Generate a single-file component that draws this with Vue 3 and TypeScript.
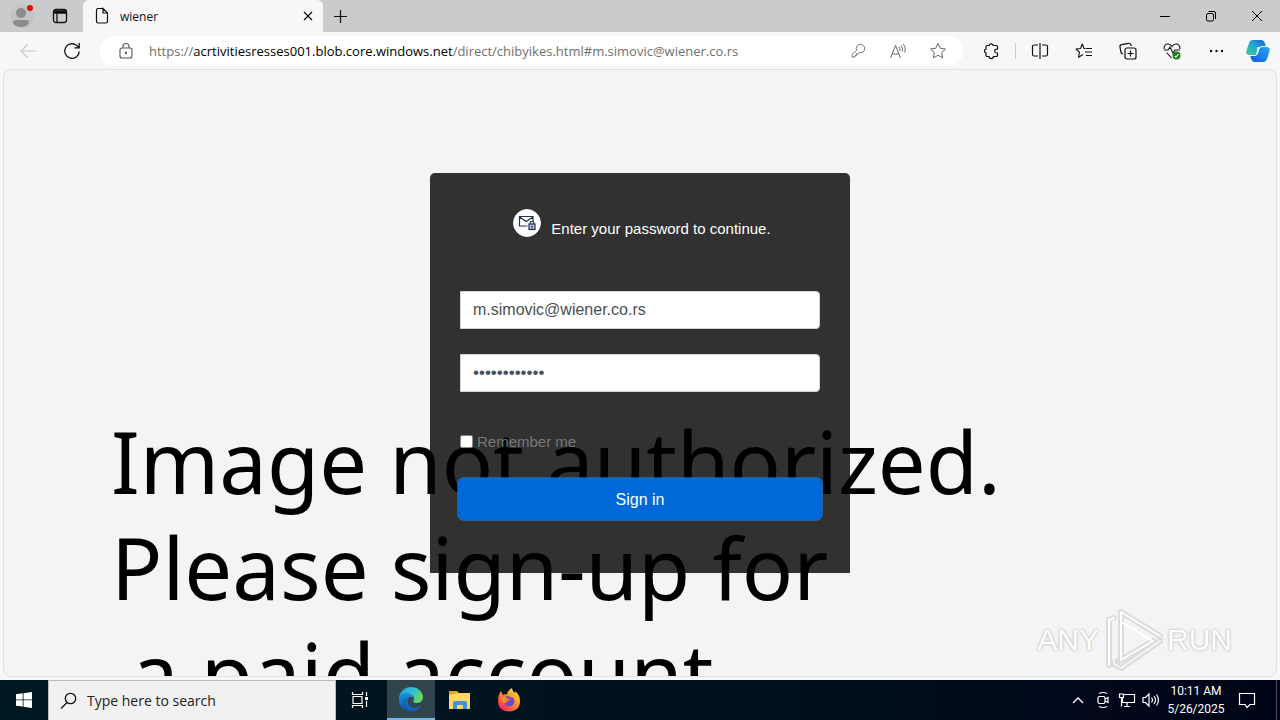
<script setup lang="ts">
import { ref } from 'vue'

const email = ref('m.simovic@wiener.co.rs')
const password = ref('abcdefghijkl')
const remember = ref(false)
const search = ref('')
</script>

<template>
  <div class="screen">
    <header class="tabs">
      <button class="tab-tool profile" aria-label="Profile">
        <svg width="26" height="26" viewBox="0 0 26 26"><circle cx="13" cy="13" r="12" fill="#c3c3c3" /><circle cx="12" cy="10" r="5" fill="#8c8c8c" /><path d="M4 20q0-3 3-3h10q3 0 3 3-2 4-8 4t-8-4z" fill="#8c8c8c" /><circle cx="21" cy="5" r="3" fill="#e80b0b" /></svg>
      </button>
      <button class="tab-tool panes" aria-label="Tab actions">
        <svg width="16" height="16" viewBox="0 0 16 16" fill="none" stroke="#111" stroke-width="1.3"><rect x="1.5" y="1.5" width="13" height="13" rx="2.5" /><path d="M2 3h12v2H2z" fill="#111" /><path d="M5 5v9" /></svg>
      </button>
      <div class="tab">
        <svg width="14" height="18" viewBox="0 0 14 18" fill="none" stroke="#111" stroke-width="1.2"><path d="M8 1.500H3Q1.500 1.500 1.500 3v11.500Q1.500 16 3 16h8q1.500 0 1.500-1.500V6L8 1.500V6h4.500" /></svg>
        <span class="tab-title">wiener</span>
        <button class="close" aria-label="Close tab">
          <svg width="10" height="10" viewBox="0 0 10 10" stroke="#111" stroke-width="1.2"><path d="M1 1l8 8M9 1l-8 8" /></svg>
        </button>
      </div>
      <button class="new-tab" aria-label="New tab">
        <svg width="15" height="15" viewBox="0 0 15 15" stroke="#111" stroke-width="1.2"><path d="M7.500 1v13M1 7.500h13" /></svg>
      </button>
      <div class="window-buttons">
        <button aria-label="Minimize"><svg width="12" height="12" viewBox="0 0 12 12" stroke="#000"><path d="M1 6.500h10" /></svg></button>
        <button aria-label="Restore"><svg width="12" height="12" viewBox="0 0 12 12" fill="none" stroke="#000"><rect x="1.500" y="3.500" width="7" height="7.500" rx="1.500" /><path d="M3.500 1.500H9q1.500 0 1.500 1.500v6" /></svg></button>
        <button aria-label="Close"><svg width="12" height="12" viewBox="0 0 12 12" stroke="#000"><path d="M1 1l10 10M11 1L1 11" /></svg></button>
      </div>
    </header>

    <nav class="toolbar">
      <button class="nav-button" aria-label="Back">
        <svg width="18" height="16" viewBox="0 0 18 16" fill="none" stroke="#c9c9c9" stroke-width="1.2"><path d="M17 8H2M8.500 1.500L2 8l6.500 6.500" /></svg>
      </button>
      <button class="nav-button" aria-label="Refresh">
        <svg width="18" height="18" viewBox="0 0 18 18" fill="none" stroke="#111" stroke-width="1.3"><path d="M16.300 9.500A7.300 7.300 0 1 1 13.500 3.300L16 5.500M16.200 1v4.800h-4.800" /></svg>
      </button>
      <div class="address">
        <svg width="14" height="18" viewBox="0 0 14 18" fill="none" stroke="#555" stroke-width="1.100"><rect x="1" y="6" width="12" height="10" rx="2" /><path d="M4 6V4.500a3 3 0 0 1 6 0V6" /><circle cx="7" cy="11" r=".6" fill="#555" /></svg>
        <span class="url">https://<b>acrtivitiesresses001.blob.core.windows.net</b>/direct/chibyikes.html#m.simovic@wiener.co.rs</span>
        <div class="address-tools">
          <button aria-label="Saved password"><svg width="16" height="16" viewBox="0 0 16 16" fill="none" stroke="#777"><path d="M6.600 7.300A4.200 4.200 0 1 1 9.200 9.600L8 10.800H6.500v1.700H5V14H2v-2.500zM11.500 4.200h.4" /></svg></button>
          <button aria-label="Read aloud"><svg width="18" height="16" viewBox="0 0 18 16" fill="none" stroke="#666"><path d="M1.500 15L6.500 2.500 11.500 15M3.300 11h6.500M10 4q1.500 1.500.8 3.800M12 2.500q2.500 2.500 1.200 6M14 1q3.500 3 1.600 8.500" /></svg></button>
          <button aria-label="Add to favorites"><svg width="18" height="18" viewBox="0 0 18 18" fill="none" stroke="#666" stroke-linejoin="round"><path d="M9 1.500l2.300 4.800 5.200.7-3.800 3.600.9 5.200L9 13.300l-4.600 2.500.9-5.200L1.500 7l5.200-.7z" /></svg></button>
        </div>
      </div>
      <div class="actions">
        <button aria-label="Extensions"><svg width="18" height="18" viewBox="0 0 18 18" fill="none" stroke="#111" stroke-width="1.200" stroke-linejoin="round"><path d="M5 3.500h2.200a2 2 0 0 1 3.900 0h3.400q1 0 1 1v2.700q-2.800-.2-2.800 1.900t2.800 1.900v2.500q0 1-1 1h-3.200a2 2 0 0 1-4.100 0H5q-1 0-1-1v-2.600a2 2 0 0 1 0-3.900V4.500q0-1 1-1z" /></svg></button>
        <i class="divider"></i>
        <button aria-label="Split screen"><svg width="18" height="18" viewBox="0 0 18 18" fill="none" stroke="#111" stroke-width="1.200"><path d="M7 3H3Q1.500 3 1.500 4.500v8Q1.500 14 3 14h4M11 3h4q1.500 0 1.500 1.500v8Q16.500 14 15 14h-4M9 1v16" /></svg></button>
        <button aria-label="Favorites"><svg width="18" height="18" viewBox="0 0 18 18" fill="none" stroke="#111" stroke-width="1.100" stroke-linejoin="round"><path d="M10.500 6.500H9L7.300 2 5.500 6.500 1 7l3.500 3.200-1 5L8 12.500M11 6.500h6M10 10h7M11 13.500h6" /></svg></button>
        <button aria-label="Collections"><svg width="18" height="18" viewBox="0 0 18 18" fill="none" stroke="#111" stroke-width="1.200"><rect x="6" y="6" width="11" height="11" rx="2" /><path d="M11.500 8.500v6M8.500 11.500h6M4 12Q2.500 12 2 10.500L1 5q-.3-2 1.500-2.300l7-1.400Q11.500 1 12 3l.3 1" /></svg></button>
        <button aria-label="Browser essentials"><svg width="18" height="18" viewBox="0 0 18 18" fill="none" stroke="#111" stroke-width="1.100"><path d="M1 7q0-5 4-5 2.500 0 4 2.500Q10.500 2 13 2q4 0 4 5M1 8h4l2-3 3 6 2-3h5M3.500 10.500L8.500 16" /><circle cx="13.500" cy="13.500" r="4" fill="#168313" stroke="none" /><path d="M11.800 14l1.200 1.200 2.400-3" stroke="#fff" /></svg></button>
        <button aria-label="Settings and more"><svg width="18" height="18" viewBox="0 0 18 18" fill="#111"><circle cx="4" cy="9" r="1.200" /><circle cx="9.500" cy="9" r="1.200" /><circle cx="15" cy="9" r="1.200" /></svg></button>
        <button class="copilot" aria-label="Copilot">
          <svg width="24" height="22" viewBox="0 0 24 22">
            <defs>
              <linearGradient id="cp1" x1="0" y1="1" x2="1" y2="0"><stop offset="0" stop-color="#3fc98a" /><stop offset=".5" stop-color="#24a9ce" /><stop offset="1" stop-color="#145ee0" /></linearGradient>
              <linearGradient id="cp2" x1="1" y1="0" x2="0" y2="1"><stop offset="0" stop-color="#2aa6ee" /><stop offset="1" stop-color="#145bdc" /></linearGradient>
            </defs>
            <path d="M7 0h8q3 0 4 3.500l.7 2.500H16q-2 0-2.800 2.500L11 15H3.500Q-.500 15 .4 11L3 3q1-3 4-3z" fill="url(#cp1)" />
            <path d="M17 22H9q-3 0-4-3.500L4.300 16H8q2 0 2.800-2.500L13 7h7.500q4 0 3.100 4L21 19q-1 3-4 3z" fill="url(#cp2)" />
            <path d="M11.500 7h4.500q-2 0-2.800 2.500L12.500 12q-1.200 4-4 4 1.500-1 2-3z" fill="#f1fbff" />
          </svg>
        </button>
      </div>
    </nav>

    <main class="page">
      <div class="backdrop" aria-hidden="true">
        <p>Image not authorized.</p>
        <p>Please sign-up for</p>
        <p class="last">a paid account.</p>
      </div>
      <form class="card" @submit.prevent>
        <div class="prompt">
          <svg width="28" height="28" viewBox="0 0 28 28" fill="none" stroke="#26304f" stroke-width="1.200"><circle cx="14" cy="14" r="13.500" fill="#fff" stroke="#eaf1ff" stroke-width="1" /><path d="M14.500 17H6.500V7.500h13.500V12M6.500 8l6.700 4.500L20 8" /><rect x="16" y="15" width="6" height="5.500" fill="#bccae6" /><path d="M17.200 15v-1.200q0-1.500 1.800-1.500t1.800 1.500V15M19 16.500v3" /></svg>
          <span>Enter your password to continue.</span>
        </div>
        <input v-model="email" class="field" type="email" aria-label="Email" />
        <input v-model="password" class="field secret" type="password" aria-label="Password" />
        <label class="remember"><input v-model="remember" type="checkbox" /><span>Remember me</span></label>
        <button class="submit" type="submit">Sign in</button>
      </form>
      <div class="watermark">
        <span>ANY</span>
        <svg width="60" height="66" viewBox="0 0 60 66" fill="none" stroke-linejoin="round" stroke-linecap="round">
          <g stroke="#dcdcdc" stroke-width="6"><path d="M11 11L6 13v45l12-5M18 5v48l32-19M18 5l39 24M57 34L18 61l-7-4" /></g>
          <g stroke="#fff" stroke-width="2"><path d="M11 11L6 13v45M18 5v48l32-19L18 15M18 5l39 24" /></g>
          <path d="M57 34L18 61l-7-4V14" stroke="#f4f4f4" stroke-width="2" />
        </svg>
        <span>RUN</span>
      </div>
    </main>

    <footer class="taskbar">
      <button class="start" aria-label="Start"><svg width="16" height="16" viewBox="0 0 16 16" fill="#fff"><path d="M0 2.200L6.700 1.300v6.200H0zM7.500 1.200L16 0v7.500H7.500zM0 8.300h6.700v6.300L0 13.700zM7.500 8.300H16V16l-8.500-1.200z" /></svg></button>
      <label class="search">
        <svg width="18" height="18" viewBox="0 0 18 18" fill="none" stroke="#111" stroke-width="1.300"><circle cx="10.500" cy="6.500" r="5.200" /><path d="M7 10.500L1 16.500" /></svg>
        <input v-model="search" type="text" placeholder="Type here to search" aria-label="Search" />
      </label>
      <div class="apps">
        <button class="app task-view" aria-label="Task view"><svg width="18" height="18" viewBox="0 0 18 18" fill="none" stroke="#fff" stroke-width="1.200"><path d="M1.500 1v2.500h10V1M1.500 17v-2.500h10V17M2 5.500h9v7H2zM15.500 1v4M15.500 10v6" /><path d="M14 6h3v3h-3z" fill="#fff" stroke="none" /></svg></button>
        <button class="app active" aria-label="Microsoft Edge">
          <svg width="26" height="26" viewBox="0 0 26 26">
            <defs>
              <linearGradient id="e1" x1="0" y1="0" x2="1" y2=".4"><stop offset="0" stop-color="#279ce0" /><stop offset=".6" stop-color="#2cc2d1" /><stop offset="1" stop-color="#65d75c" /></linearGradient>
              <linearGradient id="e2" x1="0" y1="0" x2="0" y2="1"><stop offset="0" stop-color="#1b8fdc" /><stop offset="1" stop-color="#135db5" /></linearGradient>
            </defs>
            <path d="M1 12C2 5 7 1 13 1c7 0 12 5 12 10 0 4-3 6-6.500 6-3 0-4-1.200-3-2.500 1.500-2 .5-5.500-3.500-5.500z" fill="url(#e1)" />
            <path d="M1 12c1-4 5-5 8-5 4 0 7 3 6.500 6q-1-2.500-3.500-2-3 1-2.500 5c.5 4 5 7 9.500 5.500 2-.6 3-1.500 4-1.500C21 23 18 25 13 25 5 25 0 19 1 12z" fill="url(#e2)" />
            <path d="M9.500 12q-3 3-1.500 7t5 6Q2 23 5 15q1-3 4.500-3z" fill="#0c59a4" opacity=".6" />
          </svg>
        </button>
        <button class="app" aria-label="File Explorer"><svg width="22" height="20" viewBox="0 0 22 20"><path d="M0 1h8l2 2h11v3H0z" fill="#e4a526" /><path d="M0 5l9-2h12v16H0z" fill="#ffd768" /><path d="M4 19v-6q0-2 2-2h10q2 0 2 2v6h-4v-4H8v4z" fill="#3f94d1" /></svg></button>
        <button class="app" aria-label="Firefox">
          <svg width="24" height="24" viewBox="0 0 24 24">
            <defs><linearGradient id="ff" x1="1" y1="0" x2=".2" y2="1"><stop offset="0" stop-color="#fff14a" /><stop offset=".45" stop-color="#ff9a26" /><stop offset="1" stop-color="#f52064" /></linearGradient></defs>
            <path d="M4 3l2 4q2-1 4-.5Q11 2 15 0q0 3 3 5 .5-1 0-2 5 4 5 10 0 10-11 10.500Q1 23 1 13 1 7 4 3z" fill="url(#ff)" />
            <path d="M8 9q3-2 5 0 4 0 4.500 4 0 5-5.500 5.500-5-.5-5.500-5l3 .5 3-2q-3 0-4.500-3z" fill="#7149c8" />
            <path d="M3 9l5 0q2 2 5 2l-3 2.500q-2 .5-1 2-5-1-6-6.500z" fill="#ff8b20" />
          </svg>
        </button>
      </div>
      <div class="tray">
        <svg class="chevron" width="12" height="18" viewBox="0 0 12 18" fill="none" stroke="#fff" stroke-width="1.300"><path d="M1 12l5-5 5 5" /></svg>
        <svg width="18" height="18" viewBox="0 0 18 18" fill="none" stroke="#fff" stroke-width="1.200"><rect x="4" y="5.500" width="7" height="7" rx="1.500" /><path d="M11 8l3-1.500v5L11 10M5 2.500q4-2 8 0M5 15.500q4 2 8 0" /></svg>
        <svg width="18" height="18" viewBox="0 0 18 18" fill="none" stroke="#fff" stroke-width="1.200"><path d="M5 3.500h11.500v8H4.500V7M1.500 3h4v3.500h-4zM3.500 7v8.500M9 12v3M6 15.500h6" /></svg>
        <svg width="18" height="18" viewBox="0 0 18 18" fill="none" stroke="#fff" stroke-width="1.200"><path d="M1 6.500h2.500L7 3v12l-3.500-3.500H1zM9.500 6.500q2 2.500 0 5M12 5q3 4 0 8M14.500 3.500q4 5.500 0 11" /></svg>
        <div class="clock"><span>10:11 AM</span><span>5/26/2025</span></div>
        <button class="notify" aria-label="Notifications"><svg width="18" height="18" viewBox="0 0 18 18" fill="none" stroke="#fff" stroke-width="1.200"><path d="M1.500 2.500h15v11H12L9 16.500 7 13.500H1.500z" /></svg></button>
        <i class="peek"></i>
      </div>
    </footer>
  </div>
</template>

<style>
body { margin: 0; overflow: hidden; }
</style>

<style scoped>
* { box-sizing: border-box; }
button { border: 0; padding: 0; background: none; font: inherit; color: inherit; }
button, .toolbar, .tabs { display: flex; align-items: center; justify-content: center; }
svg { display: block; flex: none; }
.screen { height: 100vh; display: flex; flex-direction: column; background: #f7f7f7; font-family: "Open Sans", "Noto Sans", sans-serif; color: #111; }
.tabs { height: 32px; flex: none; justify-content: flex-start; background: #cbcbcb; }
.tab-tool { height: 32px; }
.profile { width: 44px; }
.panes { width: 39px; padding-right: 8px; }
.tab { height: 32px; width: 240px; display: flex; align-items: center; gap: 11px; padding: 0 10px 0 12px; background: #f7f7f7; border-radius: 6px 6px 0 0; }
.tab-title { flex: 1; font-size: 12px; }
.new-tab { width: 34px; height: 32px; }
.window-buttons { margin-left: auto; display: flex; }
.window-buttons button { width: 46px; height: 32px; }
.toolbar { height: 37px; flex: none; padding: 0 10px 0 6px; }
.nav-button { width: 44px; height: 37px; }
.address { flex: 1; min-width: 0; height: 30px; display: flex; align-items: center; gap: 16px; margin-left: 6px; padding: 0 16px 0 19px; border-radius: 15px; background: #fff; }
.url { flex: 1; font-size: 13px; color: #707070; white-space: nowrap; overflow: hidden; }
.url b { font-weight: 400; color: #000; }
.address-tools { display: flex; gap: 22px; }
.address-tools button { width: 18px; }
.actions { display: flex; align-items: center; gap: 26px; padding-left: 19px; }
.divider { width: 1px; height: 16px; background: #ccc; margin: 0 -11px; }
.copilot { margin-left: -5px; }
.page { flex: 1; min-height: 0; margin: 0 3px 3px; display: grid; grid-template: 100% / 100%; overflow: hidden; position: relative; border: 1px solid #e2e2e2; border-radius: 8px; background: #f4f4f4; }
.backdrop { grid-area: 1 / 1; padding: 338px 0 0 107px; overflow: hidden; font-family: "Noto Sans", sans-serif; font-size: 85px; line-height: 106px; color: #000; white-space: pre; }
.backdrop p { margin: 0; }
.backdrop .last { padding-left: 20px; }
.card { grid-area: 1 / 1; z-index: 1; justify-self: center; align-self: start; width: 420px; height: 400px; margin-top: 103px; padding: 36px 30px 0; display: flex; flex-direction: column; border-radius: 5px 5px 0 0; background: rgba(0, 0, 0, 0.8); font-family: "Liberation Sans", Arial, sans-serif; }
.prompt { display: flex; align-items: flex-start; justify-content: center; gap: 10px; height: 82px; padding-left: 4px; color: #fff; font-size: 15px; line-height: 40px; }
.field { width: 100%; height: 38px; margin-bottom: 25px; padding: 0 12px; border: 1px solid #ced4da; border-radius: 0 4px 4px 0; background: #fff; color: #495057; font-family: inherit; font-size: 16px; outline: none; }
.secret { font-size: 17px; }
.remember { display: flex; align-items: center; gap: 4px; margin-top: 14px; height: 20px; color: #777; font-size: 15px; }
.remember input { appearance: none; width: 13px; height: 13px; margin: 0; border: 1px solid #888; border-radius: 2px; background: #fff; }
.submit { height: 38px; margin-top: 29px; padding-top: 2px; border-radius: 4px; background: #0069d9; box-shadow: 0 0 0 2px #0069d9, 0 0 0 3px rgba(38, 143, 255, 0.5); color: #fff; font-size: 16px; }
.watermark { position: absolute; right: 44px; bottom: 3px; display: flex; align-items: center; gap: 4px; color: #fff; font-family: "Liberation Sans", Arial, sans-serif; font-size: 30px; text-shadow: 0 0 3px #bbb, 0 0 2px #ccc; }
.taskbar { height: 40px; flex: none; display: flex; background: linear-gradient(90deg, #001820, #00101e 60%, #000418); color: #fff; }
.start { width: 48px; height: 40px; }
.search { width: 288px; display: flex; align-items: center; gap: 9px; padding-left: 11px; background: #f1f1f1; border: 1px solid #bbb; border-bottom: 0; }
.search input { width: 240px; border: 0; padding: 0; background: none; font-family: inherit; font-size: 14px; outline: none; }
.search input::placeholder { color: #222; opacity: 1; }
.apps { display: flex; gap: 1px; }
.app { width: 48px; height: 40px; }
.task-view { margin-right: 2px; }
.active { background: #32454d; border-bottom: 2px solid #76b9ed; }
.tray { margin-left: auto; display: flex; align-items: center; gap: 6px; }
.chevron { margin-right: 4px; }
.clock { display: flex; flex-direction: column; width: 60px; font-family: Roboto, sans-serif; font-size: 12px; line-height: 18px; text-align: center; }
.notify { width: 30px; height: 40px; }
.peek { width: 1px; height: 40px; margin: 0 3px 0 8px; background: #41505c; }
</style>
